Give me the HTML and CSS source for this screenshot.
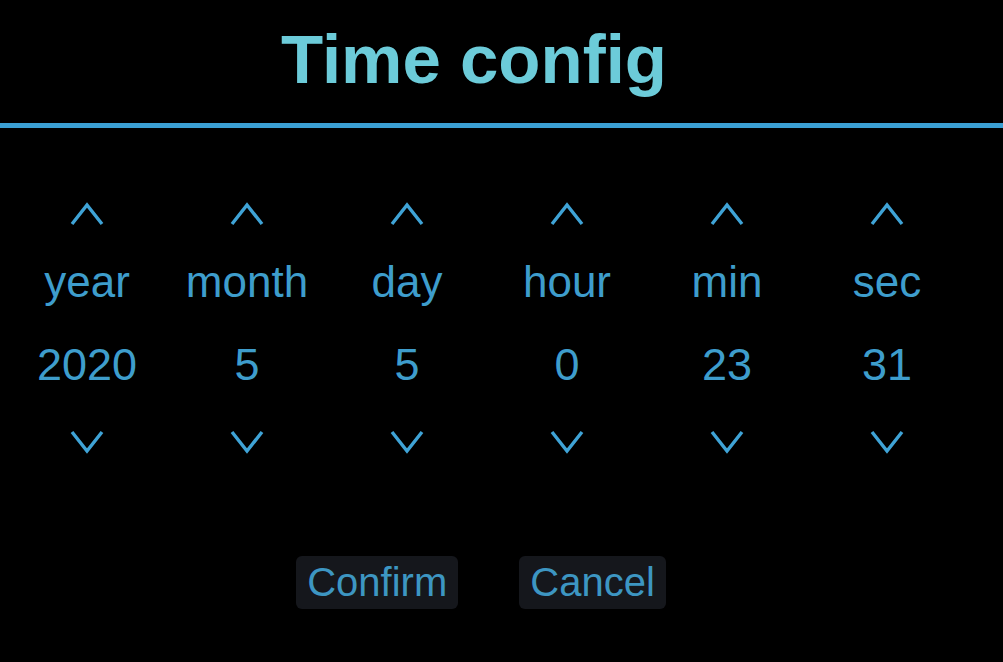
FILE: index.html
```html
<!DOCTYPE html>
<html lang="en">
<head>
    <meta charset="UTF-8">
    <meta name="viewport" content="width=device-width, initial-scale=1.0">
    <title>Time config</title>
    <link rel="stylesheet" href="styles.css">
</head>
<body>
    <div class="header">
        <h1>Time config</h1>
    </div>
    <div class="rule"></div>

    <div class="panel">
        <div class="fields">
            <div class="field">
                <button class="arrow"><svg viewBox="0 0 34 24"><polyline points="2,22 17,3 32,22"/></svg></button>
                <div class="label">year</div>
                <div class="value">2020</div>
                <button class="arrow"><svg viewBox="0 0 34 24"><polyline points="2,2 17,21 32,2"/></svg></button>
            </div>
            <div class="field">
                <button class="arrow"><svg viewBox="0 0 34 24"><polyline points="2,22 17,3 32,22"/></svg></button>
                <div class="label">month</div>
                <div class="value">5</div>
                <button class="arrow"><svg viewBox="0 0 34 24"><polyline points="2,2 17,21 32,2"/></svg></button>
            </div>
            <div class="field">
                <button class="arrow"><svg viewBox="0 0 34 24"><polyline points="2,22 17,3 32,22"/></svg></button>
                <div class="label">day</div>
                <div class="value">5</div>
                <button class="arrow"><svg viewBox="0 0 34 24"><polyline points="2,2 17,21 32,2"/></svg></button>
            </div>
            <div class="field">
                <button class="arrow"><svg viewBox="0 0 34 24"><polyline points="2,22 17,3 32,22"/></svg></button>
                <div class="label">hour</div>
                <div class="value">0</div>
                <button class="arrow"><svg viewBox="0 0 34 24"><polyline points="2,2 17,21 32,2"/></svg></button>
            </div>
            <div class="field">
                <button class="arrow"><svg viewBox="0 0 34 24"><polyline points="2,22 17,3 32,22"/></svg></button>
                <div class="label">min</div>
                <div class="value">23</div>
                <button class="arrow"><svg viewBox="0 0 34 24"><polyline points="2,2 17,21 32,2"/></svg></button>
            </div>
            <div class="field">
                <button class="arrow"><svg viewBox="0 0 34 24"><polyline points="2,22 17,3 32,22"/></svg></button>
                <div class="label">sec</div>
                <div class="value">31</div>
                <button class="arrow"><svg viewBox="0 0 34 24"><polyline points="2,2 17,21 32,2"/></svg></button>
            </div>
        </div>

        <div class="actions">
            <button class="btn">Confirm</button>
            <button class="btn">Cancel</button>
        </div>
    </div>
</body>
</html>
```

FILE: styles.css
```css
body {
    margin: 0;
    padding: 0;
    background: #000;
    font-family: 'Liberation Sans', Arial, sans-serif;
    color: #3e9dcc;
}
.header {
    width: 970px;
    padding: 20px 22px 23px 0;
    box-sizing: border-box;
    text-align: center;
}
h1 {
    margin: 0;
    font-size: 69px;
    line-height: 80px;
    font-weight: bold;
    color: #6ccbd9;
}
.rule {
    height: 5px;
    background: #3b9fd3;
}
.panel {
    width: 970px;
}
.fields {
    display: grid;
    grid-template-columns: repeat(6, 160px);
    justify-content: center;
    padding: 74px 0 0 4px;
}
.field {
    display: flex;
    flex-direction: column;
    align-items: center;
}
.arrow {
    background: none;
    border: none;
    padding: 0;
    width: 34px;
    height: 24px;
    cursor: pointer;
}
.arrow svg {
    display: block;
    width: 34px;
    height: 24px;
    fill: none;
    stroke: #3fa3d6;
    stroke-width: 3.4;
}
.label {
    font-size: 44px;
    line-height: 50px;
    margin-top: 31px;
}
.value {
    font-size: 45px;
    line-height: 50px;
    margin-top: 33px;
}
.value + .arrow {
    margin-top: 40px;
}
.actions {
    display: flex;
    justify-content: center;
    gap: 61px;
    margin-top: 102px;
    padding-right: 8px;
}
.btn {
    height: 53px;
    padding: 0 11px;
    background: #15171c;
    color: #3d96c2;
    border: none;
    border-radius: 6px;
    font-family: 'Liberation Sans', Arial, sans-serif;
    font-size: 40px;
    line-height: 53px;
    cursor: pointer;
}
```
